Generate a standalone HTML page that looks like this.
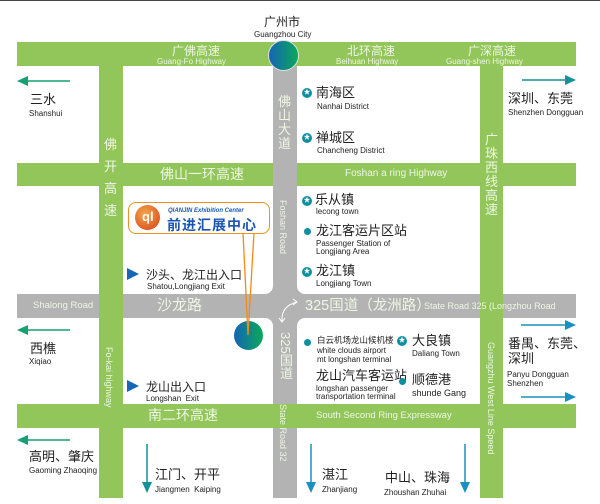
<!DOCTYPE html>
<html><head><meta charset="utf-8"><style>
*{margin:0;padding:0;box-sizing:border-box}
body{width:600px;height:504px;position:relative;background:#fff;overflow:hidden;font-family:"Liberation Sans","Noto Sans CJK SC",sans-serif;color:#222}
.a{position:absolute;white-space:nowrap}
.g{background:#92c65a}
.r{background:#b3b3b3}
.cn{font-size:13px;line-height:14px}
.en{font-size:8px;line-height:9px}
.w{color:#fff}
.wt{color:#eef6e4}
.vt{writing-mode:vertical-rl;}
.star{position:absolute;width:10px;height:10px;border-radius:50%;background:#0e8fa0;}
.star::after{content:"★";position:absolute;left:1.5px;top:-1px;font-size:7px;color:#fff}
.dot{position:absolute;width:7px;height:7px;border-radius:50%;background:#0e8fa0}
.tri{position:absolute;width:0;height:0;border-top:6px solid transparent;border-bottom:6px solid transparent;border-left:12px solid #1467b3}
</style></head><body>
<div class="a" style="left:0;top:0;width:600px;height:1px;background:#444"></div>
<!-- roads -->
<div class="a g" style="left:17px;top:42px;width:559px;height:24px"></div>
<div class="a g" style="left:17px;top:163px;width:559px;height:23px"></div>
<div class="a r" style="left:17px;top:294px;width:559px;height:24px"></div>
<div class="a r" style="left:273px;top:66px;width:24px;height:432px"></div>
<svg class="a" style="left:0;top:0" width="600" height="504">
<path d="M265 294 h8 v-8 a8 8 0 0 1 -8 8z" fill="#b3b3b3"/>
<path d="M305 294 h-8 v-8 a8 8 0 0 0 8 8z" fill="#b3b3b3"/>
<path d="M265 318 h8 v8 a8 8 0 0 0 -8 -8z" fill="#b3b3b3"/>
<path d="M305 318 h-8 v8 a8 8 0 0 1 8 -8z" fill="#b3b3b3"/>
</svg>
<div class="a g" style="left:17px;top:404px;width:559px;height:24px"></div>
<div class="a g" style="left:99px;top:42px;width:24px;height:456px"></div>
<div class="a g" style="left:480px;top:42px;width:23px;height:456px"></div>
<!-- circles -->
<div class="a" style="left:268px;top:40px;width:31px;height:31px;border-radius:50%;background:linear-gradient(90deg,#1565b5,#0aa85a);border:1px solid #ddd"></div>
<div class="a" style="left:234px;top:321px;width:29px;height:29px;border-radius:50%;background:linear-gradient(90deg,#1565b5,#0aa85a)"></div>
<!-- top labels -->
<div class="a cn" style="left:264px;top:15px;font-size:12px">广州市</div>
<div class="a en" style="left:254px;top:30px">Guangzhou City</div>
<div class="a cn wt" style="left:172px;top:44px;font-size:12px">广佛高速</div>
<div class="a en wt" style="left:157px;top:57px">Guang-Fo Highway</div>
<div class="a cn wt" style="left:347px;top:44px;font-size:12px">北环高速</div>
<div class="a en wt" style="left:336px;top:57px">Beihuan Highway</div>
<div class="a cn wt" style="left:468px;top:44px;font-size:12px">广深高速</div>
<div class="a en wt" style="left:446px;top:57px">Guang-shen Highway</div>
<div class="a cn wt" style="left:160px;top:167px;font-size:14px">佛山一环高速</div>
<div class="a wt" style="left:345px;top:168px;font-size:10px">Foshan a ring Highway</div>
<div class="a cn wt" style="left:148px;top:408px;font-size:14px">南二环高速</div>
<div class="a wt" style="left:316px;top:410px;font-size:9.5px">South Second Ring Expressway</div>
<div class="a wt" style="left:33px;top:300px;font-size:9.5px">Shalong Road</div>
<div class="a wt" style="left:157px;top:298px;font-size:15px;line-height:16px">沙龙路</div>
<div class="a wt" style="left:305px;top:298px;font-size:14.5px;line-height:16px">325国道（龙洲路）</div>
<div class="a wt" style="left:424px;top:301px;font-size:9px">State Road 325 (Longzhou Road</div>
<!-- vertical labels -->
<div class="a cn wt" style="left:104px;top:134px;width:14px;white-space:normal;line-height:22px">佛<br>开<br>高<br>速</div>
<div class="a cn wt" style="left:278px;top:95px;white-space:normal;width:14px;line-height:14px">佛<br>山<br>大<br>道</div>
<div class="a wt vt" style="left:278px;top:200px;font-size:9px">Foshan Road</div>
<div class="a wt vt" style="left:104px;top:347px;font-size:9px">Fo-kai highway</div>
<div class="a wt vt" style="left:276px;top:332px;font-size:13px">325国道</div>
<div class="a wt vt" style="left:278px;top:404px;font-size:9px">State Road 32</div>
<div class="a cn wt" style="left:485px;top:133px;white-space:normal;width:14px;line-height:14px">广<br>珠<br>西<br>线<br>高<br>速</div>
<div class="a wt vt" style="left:486px;top:342px;font-size:9px">Guangzhu West Line Speed</div>
<!-- callout -->
<div class="a" style="left:128px;top:202px;width:142px;height:32px;border:1.5px solid #f09020;border-radius:8px;background:#fff"></div>
<svg class="a" style="left:0;top:0" width="600" height="504"><path d="M243 233 L248 335 L254 233" fill="none" stroke="#f08a18" stroke-width="1.3"/>
<path d="M282 321 q-1 -15 15 -19" fill="none" stroke="#fff" stroke-width="1"/><path d="M293 299 l4 3 -4 3" fill="none" stroke="#fff" stroke-width="1"/><path d="M279 318 l3 4 3 -4" fill="none" stroke="#fff" stroke-width="1"/>
<!-- arrows -->
<g stroke-width="1.5"><line x1="24" y1="81" x2="70" y2="81" stroke="#17a070"/><polygon points="17,81 28,76 28,86" fill="#17a070"/>
<line x1="24" y1="330" x2="70" y2="330" stroke="#17a070"/><polygon points="17,330 28,325 28,335" fill="#17a070"/>
<line x1="24" y1="440" x2="70" y2="440" stroke="#17a070"/><polygon points="17,440 28,435 28,445" fill="#17a070"/>
<line x1="522" y1="80" x2="568" y2="80" stroke="#14909a"/><polygon points="576,80 565,75 565,85" fill="#14909a"/>
<line x1="521" y1="325" x2="568" y2="325" stroke="#1a8fc0"/><polygon points="576,325 565,320 565,330" fill="#1a8fc0"/>
<line x1="521" y1="397" x2="568" y2="397" stroke="#1a8fc0"/><polygon points="576,397 565,392 565,402" fill="#1a8fc0"/>
<line x1="147" y1="444" x2="147" y2="484" stroke="#14909a"/><polygon points="147,493 142,482 152,482" fill="#14909a"/>
<line x1="311" y1="444" x2="311" y2="484" stroke="#1a8fc0"/><polygon points="311,493 306,482 316,482" fill="#1a8fc0"/>
<line x1="465" y1="444" x2="465" y2="484" stroke="#1a8fc0"/><polygon points="465,493 460,482 470,482" fill="#1a8fc0"/></g>
</svg>
<div class="a" style="left:135px;top:205px;width:25px;height:25px;border-radius:50%;background:radial-gradient(circle at 40% 35%,#f6a54a,#d4401a)"></div>
<div class="a" style="left:142px;top:209px;color:#fff;font-weight:bold;font-size:13px">ql</div>
<div class="a" style="left:168px;top:208px;font-size:6px;font-weight:bold;color:#1a56b0;font-style:italic">QIANJIN Exhibition Center</div>
<div class="a" style="left:167px;top:215px;font-size:14px;font-weight:bold;color:#1a56b0;letter-spacing:1px">前进汇展中心</div>
<!-- place labels -->
<div class="a cn" style="left:30px;top:93px">三水</div><div class="a en" style="left:29px;top:109px">Shanshui</div>
<div class="a cn" style="left:30px;top:342px">西樵</div><div class="a en" style="left:29px;top:357px">Xiqiao</div>
<div class="a cn" style="left:29px;top:450px">高明、肇庆</div><div class="a en" style="left:29px;top:466px">Gaoming Zhaoqing</div>
<div class="a cn" style="left:155px;top:468px">江门、开平</div><div class="a en" style="left:155px;top:485px">Jiangmen&nbsp; Kaiping</div>
<div class="a cn" style="left:322px;top:468px">湛江</div><div class="a en" style="left:322px;top:485px">Zhanjiang</div>
<div class="a cn" style="left:385px;top:471px">中山、珠海</div><div class="a en" style="left:384px;top:488px">Zhoushan Zhuhai</div>
<div class="a cn" style="left:508px;top:92px">深圳、东莞</div><div class="a en" style="left:508px;top:108px">Shenzhen Dongguan</div>
<div class="a cn" style="left:508px;top:337px">番禺、东莞、</div><div class="a cn" style="left:508px;top:352px">深圳</div>
<div class="a en" style="left:507px;top:370px">Panyu Dongguan</div><div class="a en" style="left:507px;top:379px">Shenzhen</div>
<div class="star" style="left:302px;top:88px"></div><div class="a cn" style="left:316px;top:86px">南海区</div><div class="a en" style="left:317px;top:102px">Nanhai District</div>
<div class="star" style="left:302px;top:133px"></div><div class="a cn" style="left:316px;top:131px">禅城区</div><div class="a en" style="left:317px;top:146px">Chancheng District</div>
<div class="star" style="left:302px;top:196px"></div><div class="a cn" style="left:315px;top:193px">乐从镇</div><div class="a en" style="left:316px;top:207px">lecong town</div>
<div class="dot" style="left:304px;top:228px"></div><div class="a cn" style="left:316px;top:224px">龙江客运片区站</div>
<div class="a en" style="left:316px;top:239px">Passenger Station of</div><div class="a en" style="left:316px;top:247px">Longjiang Area</div>
<div class="star" style="left:302px;top:267px"></div><div class="a cn" style="left:316px;top:264px">龙江镇</div><div class="a en" style="left:316px;top:279px">Longjiang Town</div>
<div class="dot" style="left:304px;top:339px"></div><div class="a" style="left:317px;top:334px;font-size:8.5px">白云机场龙山候机楼</div>
<div class="a en" style="left:317px;top:346px">white clouds airport</div><div class="a en" style="left:317px;top:355px">mt longshan terminal</div>
<div class="a cn" style="left:316px;top:369px">龙山汽车客运站</div>
<div class="a en" style="left:316px;top:384px">longshan passenger</div><div class="a en" style="left:316px;top:392px">transportation terminal</div>
<div class="star" style="left:397px;top:336px"></div><div class="a cn" style="left:412px;top:334px">大良镇</div><div class="a en" style="left:412px;top:349px">Daliang Town</div>
<div class="dot" style="left:399px;top:378px"></div><div class="a cn" style="left:412px;top:373px">顺德港</div><div class="a" style="left:412px;top:388px;font-size:9px">shunde Gang</div>
<div class="tri" style="left:127px;top:268px"></div><div class="a" style="left:146px;top:266px;font-size:12px">沙头、龙江出入口</div><div class="a en" style="left:147px;top:282px">Shatou,Longjiang Exit</div>
<div class="tri" style="left:127px;top:380px"></div><div class="a" style="left:146px;top:378px;font-size:12px">龙山出入口</div><div class="a en" style="left:146px;top:394px">Longshan&nbsp; Exit</div>
</body></html>
